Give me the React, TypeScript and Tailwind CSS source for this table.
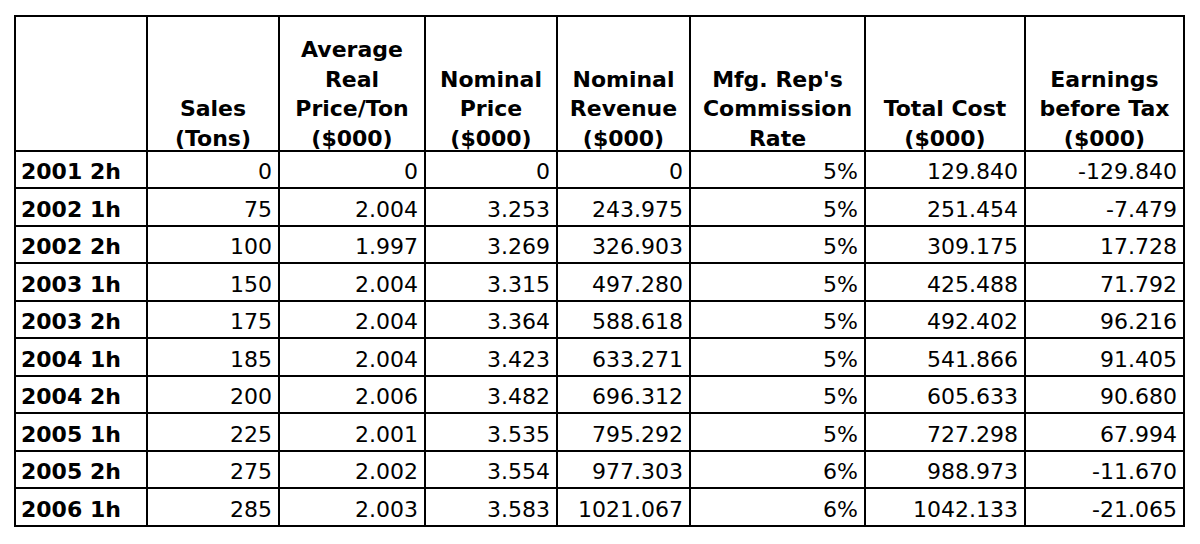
const headers = [
  "",
  "Sales\n(Tons)",
  "Average\nReal\nPrice/Ton\n($000)",
  "Nominal\nPrice\n($000)",
  "Nominal\nRevenue\n($000)",
  "Mfg. Rep's\nCommission\nRate",
  "Total Cost\n($000)",
  "Earnings\nbefore Tax\n($000)",
];

const widths = ["w-[132px]", "w-[132px]", "w-[146px]", "w-[132px]", "w-[133px]", "w-[175px]", "w-[160px]", "w-[159px]"];

const rows = [
  ["2001 2h", "0", "0", "0", "0", "5%", "129.840", "-129.840"],
  ["2002 1h", "75", "2.004", "3.253", "243.975", "5%", "251.454", "-7.479"],
  ["2002 2h", "100", "1.997", "3.269", "326.903", "5%", "309.175", "17.728"],
  ["2003 1h", "150", "2.004", "3.315", "497.280", "5%", "425.488", "71.792"],
  ["2003 2h", "175", "2.004", "3.364", "588.618", "5%", "492.402", "96.216"],
  ["2004 1h", "185", "2.004", "3.423", "633.271", "5%", "541.866", "91.405"],
  ["2004 2h", "200", "2.006", "3.482", "696.312", "5%", "605.633", "90.680"],
  ["2005 1h", "225", "2.001", "3.535", "795.292", "5%", "727.298", "67.994"],
  ["2005 2h", "275", "2.002", "3.554", "977.303", "6%", "988.973", "-11.670"],
  ["2006 1h", "285", "2.003", "3.583", "1021.067", "6%", "1042.133", "-21.065"],
];

export default function App() {
  return (
    <div className="w-[1200px] h-[544px] bg-white pt-[15px] pl-[14px] text-black font-['DejaVu_Sans',sans-serif]">
      <table className="table-fixed border-collapse border-2 border-black text-[22px]">
        <colgroup>
          {widths.map((w, i) => <col key={i} className={w} />)}
        </colgroup>
        <thead>
          <tr className="h-[135px]">
            {headers.map((h, i) => (
              <th key={i} className="border-2 border-black align-bottom text-center font-bold leading-[29.5px] px-0 pb-0 whitespace-pre-line">
                <div className="-mb-[3px]">{h}</div>
              </th>
            ))}
          </tr>
        </thead>
        <tbody>
          {rows.map((r, ri) => (
            <tr key={ri} className={ri % 2 === 0 ? "h-[37px]" : "h-[38px]"}>
              {r.map((c, ci) => (
                <td key={ci} className={ci === 0 ? "border-2 border-black font-bold text-left pl-[5px] leading-none pt-[5px]" : "border-2 border-black text-right pr-[6px] leading-none pt-[5px]"}>
                  {c}
                </td>
              ))}
            </tr>
          ))}
        </tbody>
      </table>
    </div>
  );
}
